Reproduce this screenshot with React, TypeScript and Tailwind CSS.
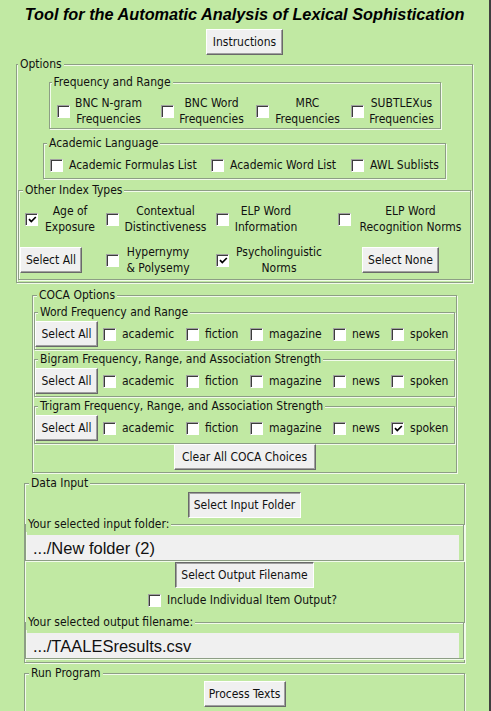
import React from 'react';

type Kids = { children?: React.ReactNode };

// etched labelframe, caption drawn across the top edge
const Frame = ({
  label,
  className = '',
  labelClass = 'ml-[3px]',
  children,
}: Kids & { label: string; className?: string; labelClass?: string }) => (
  <div
    className={`flex shrink-0 flex-col border border-[#8d9e85] shadow-[inset_1px_1px_0_#f2fbeb,1px_1px_0_#f2fbeb] ${className}`}
  >
    <span
      className={`-mt-[9px] self-start whitespace-nowrap bg-[#c1e9a3] px-[2px] leading-[16px] ${labelClass}`}
    >
      {label}
    </span>
    {children}
  </div>
);

const Button = ({
  children,
  className = '',
  sunken = false,
}: Kids & { className?: string; sunken?: boolean }) => (
  <button
    type="button"
    className={`flex h-[26px] shrink-0 items-center justify-center whitespace-nowrap border bg-[#f0f0f0] leading-none ${
      sunken
        ? 'border-t-[#696969] border-l-[#696969] border-r-white border-b-white shadow-[inset_1px_1px_0_#a0a0a0]'
        : 'border-t-white border-l-white border-r-[#696969] border-b-[#696969] shadow-[inset_-1px_-1px_0_#a0a0a0]'
    } ${className}`}
  >
    {children}
  </button>
);

const Box = ({ on = false }: { on?: boolean }) => (
  <span className="flex h-[13px] w-[13px] shrink-0 items-center justify-center border border-t-[#a0a0a0] border-l-[#a0a0a0] border-r-white border-b-white bg-white shadow-[inset_1px_1px_0_#3c3c3c]">
    {on && (
      <svg width="9" height="9" viewBox="0 0 9 9" className="ml-px mt-px">
        <path d="M1 4.2 L3.3 6.6 L7.8 2" fill="none" stroke="#000" strokeWidth="1.7" />
      </svg>
    )}
  </span>
);

// two-line caption used by the grid checkbuttons
const Two = ({ a, b, className = '' }: { a: string; b: string; className?: string }) => (
  <span className={`shrink-0 whitespace-nowrap text-center leading-[16px] ${className}`}>
    {a}
    <br />
    {b}
  </span>
);

const corpora = [
  { name: 'academic', w: 'w-[83px]' },
  { name: 'fiction', w: 'w-[64px]' },
  { name: 'magazine', w: 'w-[83px]' },
  { name: 'news', w: 'w-[58px]' },
  { name: 'spoken', w: '' },
];

const CocaRow = ({ label, spoken = false, className = '' }: { label: string; spoken?: boolean; className?: string }) => (
  <Frame label={label} className={`mx-[1px] h-[38px] ${className}`}>
    <div className="mt-[1px] flex items-center">
      <Button className="w-[63px]">Select All</Button>
      <div className="ml-[5px] flex items-center">
        {corpora.map((c) => (
          <div key={c.name} className={`flex items-center ${c.w}`}>
            <Box on={spoken && c.name === 'spoken'} />
            <span className="ml-[6px] leading-[16px]">{c.name}</span>
          </div>
        ))}
      </div>
    </div>
  </Frame>
);

const Entry = ({ value }: { value: string }) => (
  <div className="ml-[1px] mt-[3px] flex h-[25px] w-[432px] items-center bg-[#f0f0f0] pl-[6px] pt-[2px] font-['Liberation_Sans',Arial,sans-serif] text-[16.5px] leading-none">
    {value}
  </div>
);

export default function App() {
  return (
    <div className="flex h-[711px] w-[491px] flex-col items-center overflow-hidden border-r-2 border-[#3f3f3f] bg-[#c1e9a3] font-['DejaVu_Sans_Condensed','Liberation_Sans',sans-serif] text-[12px] text-[#111]">
      <h1 className="pt-[3px] font-['Liberation_Sans',Arial,sans-serif] text-[16.3px] font-bold italic leading-[22px] text-black">
        Tool for the Automatic Analysis of Lexical Sophistication
      </h1>
      <Button className="mt-[4px] w-[77px]">Instructions</Button>

      {/* index options */}
      <Frame label="Options" labelClass="ml-[1px]" className="mt-[9px] h-[219px] w-[457px]">
        <Frame label="Frequency and Range" labelClass="ml-[2px]" className="mt-[10px] h-[47px] w-[392px] self-center">
          <div className="mt-[5px] flex items-center pl-[7px]">
            <div className="flex w-[104px] items-center">
              <Box />
              <Two a="BNC N-gram" b="Frequencies" className="ml-[4px] w-[70px]" />
            </div>
            <div className="flex w-[95px] items-center">
              <Box />
              <Two a="BNC Word" b="Frequencies" className="ml-[3px] w-[70px]" />
            </div>
            <div className="flex w-[95px] items-center">
              <Box />
              <Two a="MRC" b="Frequencies" className="ml-[4px] w-[70px]" />
            </div>
            <div className="flex items-center">
              <Box />
              <Two a="SUBTLEXus" b="Frequencies" className="ml-[3px] w-[70px]" />
            </div>
          </div>
        </Frame>

        <Frame label="Academic Language" className="mt-[14px] h-[36px] w-[403px] self-center">
          <div className="mt-[6px] flex items-center pl-[6px] leading-[16px]">
            <div className="flex w-[161px] items-center">
              <Box />
              <span className="ml-[6px]">Academic Formulas List</span>
            </div>
            <div className="flex w-[140px] items-center">
              <Box />
              <span className="ml-[6px]">Academic Word List</span>
            </div>
            <div className="flex items-center">
              <Box />
              <span className="ml-[6px]">AWL Sublists</span>
            </div>
          </div>
        </Frame>

        <Frame label="Other Index Types" labelClass="ml-[4px]" className="mx-[1px] mt-[11px] h-[90px]">
          <div className="mt-[5px] flex h-[32px] items-center">
            <div className="flex w-[82px] items-center pl-[6px]">
              <Box on />
              <Two a="Age of" b="Exposure" className="ml-[6px] w-[52px]" />
            </div>
            <div className="flex w-[110px] items-center pl-[5px]">
              <Box />
              <Two a="Contextual" b="Distinctiveness" className="ml-[5px] w-[83px]" />
            </div>
            <div className="flex w-[120px] items-center pl-[5px]">
              <Box />
              <Two a="ELP Word" b="Information" className="ml-[4px] w-[66px]" />
            </div>
            <div className="flex items-center pl-[7px]">
              <Box />
              <Two a="ELP Word" b="Recognition Norms" className="ml-[5px] w-[109px]" />
            </div>
          </div>
          <div className="mt-[12px] flex h-[26px] items-center">
            <div className="flex w-[82px] items-center">
              <Button className="ml-[1px] w-[62px]">Select All</Button>
            </div>
            <div className="flex w-[110px] items-center pl-[5px]">
              <Box />
              <Two a="Hypernymy" b="& Polysemy" className="ml-[5px] w-[68px]" />
            </div>
            <div className="flex w-[120px] items-center pl-[5px]">
              <Box on />
              <Two a="Psycholinguistic" b="Norms" className="ml-[4px] w-[92px]" />
            </div>
            <div className="flex items-center pl-[31px]">
              <Button className="w-[77px]">Select None</Button>
            </div>
          </div>
        </Frame>
      </Frame>

      {/* COCA n-gram options */}
      <Frame label="COCA Options" labelClass="ml-[4px]" className="mt-[12px] h-[178px] w-[425px]">
        <CocaRow label="Word Frequency and Range" className="mt-[9px]" />
        <CocaRow label="Bigram Frequency, Range, and Association Strength" className="mt-[9px]" />
        <CocaRow label="Trigram Frequency, Range, and Association Strength" spoken className="mt-[9px]" />
        <Button className="w-[142px] self-center">Clear All COCA Choices</Button>
      </Frame>

      <Frame label="Data Input" labelClass="ml-[4px]" className="mt-[10px] h-[180px] w-[441px]">
        <Button sunken className="mt-[1px] w-[113px] self-center">
          Select Input Folder
        </Button>
        <Frame label="Your selected input folder:" labelClass="ml-0" className="mt-[6px] h-[37px]">
          <Entry value=".../New folder (2)" />
        </Frame>
        <Button sunken className="mt-[1px] w-[139px] self-center">
          Select Output Filename
        </Button>
        <div className="mt-[4px] flex h-[16px] items-center pl-[123px]">
          <Box />
          <span className="ml-[6px] leading-[16px]">Include Individual Item Output?</span>
        </div>
        <Frame label="Your selected output filename:" labelClass="ml-0" className="mt-[14px] h-[37px]">
          <Entry value=".../TAALESresults.csv" />
        </Frame>
      </Frame>

      <Frame label="Run Program" labelClass="ml-[4px]" className="mt-[10px] h-[60px] w-[441px]">
        <Button className="w-[82px] self-center">Process Texts</Button>
      </Frame>
    </div>
  );
}
